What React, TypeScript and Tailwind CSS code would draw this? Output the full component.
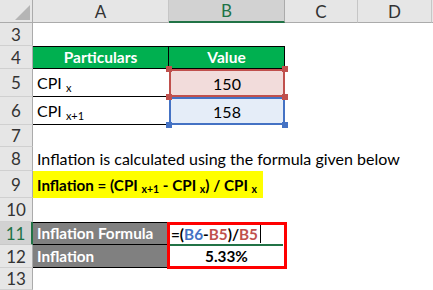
import React from "react";

const RH = ({ n, sel = false }: { n?: string; sel?: boolean }) => (
  <div
    className={
      sel
        ? "w-[33px] shrink-0 bg-[#d2d2d2] border-r-2 border-r-[#217346] border-b border-b-[#c8c8c8] flex items-center justify-center text-[#217346] text-[17px] leading-none"
        : "w-[33px] shrink-0 bg-[#e6e6e6] border-r border-r-[#ababab] border-b border-b-[#d0d0d0] flex items-center justify-center text-[#333] text-[17px] leading-none"
    }
  >
    {n}
  </div>
);

const Handle = ({ pos, color }: { pos: string; color: string }) => (
  <div className={`absolute w-[6px] h-[6px] z-20 ${pos} ${color}`} />
);

export default function App() {
  return (
    <div className="w-[433px] h-[290px] overflow-hidden bg-white font-[family-name:Lato,sans-serif] text-black select-none">
      {/* column headers */}
      <div className="flex h-[23px]">
        <div className="w-[33px] shrink-0 bg-[#e6e6e6] border-r border-b border-[#ababab] relative">
          <svg className="absolute left-0 top-0" width="33" height="23" viewBox="0 0 33 23">
            <polygon points="30,5 30,20 15,20" fill="#b5b5b5" />
          </svg>
        </div>
        <div className="w-[136px] shrink-0 bg-[#e6e6e6] border-r border-r-[#c6c6c6] border-b border-b-[#ababab] flex items-center justify-center text-[17px] text-[#333] leading-none">
          A
        </div>
        <div className="w-[116px] shrink-0 bg-[#d2d2d2] border-r border-r-[#ababab] border-b-2 border-b-[#217346] flex items-center justify-center text-[17px] text-[#217346] leading-none">
          B
        </div>
        <div className="w-[73px] shrink-0 bg-[#e6e6e6] border-r border-r-[#c6c6c6] border-b border-b-[#ababab] flex items-center justify-center text-[17px] text-[#333] leading-none">
          C
        </div>
        <div className="w-[74px] shrink-0 bg-[#e6e6e6] border-r border-r-[#c6c6c6] border-b border-b-[#ababab] flex items-center justify-center text-[17px] text-[#333] leading-none">
          D
        </div>
        <div className="flex-1 bg-[#e6e6e6] border-b border-b-[#ababab]" />
      </div>

      {/* row 3 */}
      <div className="flex h-[23px]">
        <RH n="3" />
        <div className="flex-1" />
      </div>

      {/* row 4 */}
      <div className="flex h-[23px]">
        <RH n="4" />
        <div className="w-[136px] shrink-0 bg-[#00b050] border-y border-r border-black flex items-center justify-center text-white font-bold text-[15.5px] leading-none">
          Particulars
        </div>
        <div className="w-[116px] shrink-0 bg-[#00b050] border-y border-r border-black flex items-center justify-center text-white font-bold text-[15.5px] leading-none">
          Value
        </div>
        <div className="flex-1" />
      </div>

      {/* row 5 */}
      <div className="flex h-[28px]">
        <RH n="5" />
        <div className="w-[136px] shrink-0 border-b border-black flex items-end pl-[4px] pb-[5px] text-[16px] leading-none">
          <span>
            CPI <sub className="text-[11px]">x</sub>
          </span>
        </div>
        <div className="w-[116px] shrink-0 bg-[#f2dcdb] relative flex items-end justify-center pb-[5px] text-[16px] leading-none">
          <div className="absolute inset-0 border-2 border-[#c0504d] z-10" />
          <Handle pos="-left-[3px] -top-[3px]" color="bg-[#c0504d]" />
          <Handle pos="-right-[3px] -top-[3px]" color="bg-[#c0504d]" />
          <Handle pos="-left-[3px] -bottom-[3px]" color="bg-[#c0504d]" />
          <Handle pos="-right-[3px] -bottom-[3px]" color="bg-[#c0504d]" />
          150
        </div>
        <div className="flex-1" />
      </div>

      {/* row 6 */}
      <div className="flex h-[28px]">
        <RH n="6" />
        <div className="w-[136px] shrink-0 border-b border-black flex items-end pl-[4px] pb-[5px] text-[16px] leading-none">
          <span>
            CPI <sub className="text-[11px]">x+1</sub>
          </span>
        </div>
        <div className="w-[116px] shrink-0 bg-[#e5edf8] relative flex items-end justify-center pb-[5px] text-[16px] leading-none">
          <div className="absolute inset-0 border-2 border-[#4472c4]" />
          <Handle pos="-left-[3px] -bottom-[3px]" color="bg-[#4472c4]" />
          <Handle pos="-right-[3px] -bottom-[3px]" color="bg-[#4472c4]" />
          158
        </div>
        <div className="flex-1" />
      </div>

      {/* row 7 */}
      <div className="flex h-[22px]">
        <RH n="7" />
        <div className="flex-1" />
      </div>

      {/* row 8 */}
      <div className="flex h-[24px]">
        <RH n="8" />
        <div className="flex-1 flex items-end pl-[4px] pb-[4px] text-[16px] leading-none whitespace-nowrap">
          Inflation is calculated using the formula given below
        </div>
      </div>

      {/* row 9 */}
      <div className="flex h-[27px]">
        <RH n="9" />
        <div className="w-[230px] shrink-0 bg-[#ffff00] flex items-end pl-[4px] pb-[5px] text-[15.2px] font-bold leading-none whitespace-nowrap">
          <span>
            Inflation = (CPI <sub className="text-[10.5px]">x+1</sub> - CPI <sub className="text-[10.5px]">x</sub>) / CPI{" "}
            <sub className="text-[10.5px]">x</sub>
          </span>
        </div>
        <div className="flex-1" />
      </div>

      {/* row 10 */}
      <div className="flex h-[24px]">
        <RH n="10" />
        <div className="flex-1" />
      </div>

      {/* row 11 */}
      <div className="flex h-[23px]">
        <RH n="11" sel />
        <div className="w-[136px] shrink-0 bg-[#808080] border-t border-b border-r border-black flex items-end pl-[4px] pb-[3px] text-white font-bold text-[15.3px] leading-none">
          Inflation Formula
        </div>
        <div className="w-[116px] shrink-0 relative border-t border-black border-r border-r-black flex items-end pl-[2px] pb-[3px] font-bold text-[15.3px] leading-none whitespace-nowrap">
          <div className="absolute -left-[2px] -top-[1px] w-[120px] h-[47px] border-[3px] border-[#ff0000] z-10" />
          <div className="absolute left-0 right-[1px] bottom-[-1px] h-[2px] bg-[#217346]" />
          <span>
            =(<span className="text-[#4472c4]">B6</span>-<span className="text-[#c0504d]">B5</span>)/
            <span className="text-[#c0504d]">B5</span>
          </span>
          <span className="inline-block w-px h-[20px] bg-black ml-[2px] mb-[-1px]" />
        </div>
        <div className="flex-1" />
      </div>

      {/* row 12 */}
      <div className="flex h-[23px]">
        <RH n="12" />
        <div className="w-[136px] shrink-0 bg-[#808080] border-b border-r border-black flex items-end pl-[4px] pb-[3px] text-white font-bold text-[15.3px] leading-none">
          Inflation
        </div>
        <div className="w-[116px] shrink-0 border-b border-r border-black flex items-end justify-center pb-[3px] font-bold text-[15.3px] leading-none">
          5.33%
        </div>
        <div className="flex-1" />
      </div>

      {/* row 13 */}
      <div className="flex h-[22px]">
        <RH n="13" />
        <div className="flex-1" />
      </div>
    </div>
  );
}
